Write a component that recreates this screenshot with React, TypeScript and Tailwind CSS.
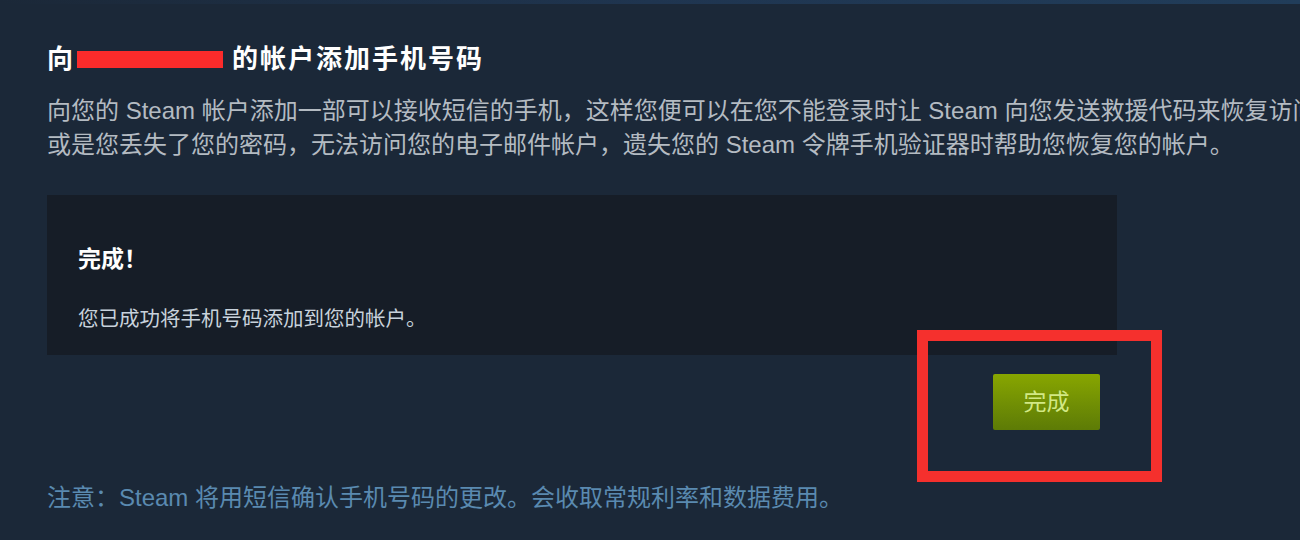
export default function App() {
  return (
    <div
      className="relative h-[540px] w-[1300px] overflow-hidden bg-[#1b2838]"
      style={{ fontFamily: '"Liberation Sans", "Noto Sans CJK SC", sans-serif' }}
    >
      <div className="h-1 bg-gradient-to-r from-[#1b2838] via-[#1f3550] to-[#213d5a]" />

      <div className="pl-[47px]">
        <h1 className="mt-[37px] flex h-[36px] items-center text-[26px] font-bold leading-[36px] text-white">
          <span>向</span>
          <span className="ml-[4px] inline-block h-[17px] w-[146px] bg-[#fb2b2b]" />
          <span className="ml-[9px] tracking-[2px]">的帐户添加手机号码</span>
        </h1>

        {/* first line runs past the right edge, as in the original page */}
        <p className="mt-[17px] whitespace-nowrap text-[24px] leading-[34px] text-[#b4bbc2]">
          向您的 Steam 帐户添加一部可以接收短信的手机，这样您便可以在您不能登录时让 Steam 向您发送救援代码来恢复访问，
          <br />
          或是您丢失了您的密码，无法访问您的电子邮件帐户，遗失您的 Steam 令牌手机验证器时帮助您恢复您的帐户。
        </p>

        <div className="mt-[33px] h-[160px] w-[1070px] bg-[#161d27] pl-[31px] pt-[49px]">
          <div className="text-[23px] font-bold leading-[30px] text-white">完成！</div>
          <div className="mt-[31px] text-[20.5px] leading-[28px] text-[#c8d2dc]">
            您已成功将手机号码添加到您的帐户。
          </div>
        </div>

        <div className="mt-[19px] flex w-[1070px] justify-end pr-[17px]">
          <button className="flex h-[56px] w-[107px] items-center justify-center rounded-[2px] bg-gradient-to-b from-[#88a600] to-[#5d7b06] text-[23px] text-[#d2e885]">
            完成
          </button>
        </div>

        <p className="mt-[53px] whitespace-nowrap text-[24px] leading-[30px] text-[#5a8ab0]">
          注意：Steam 将用短信确认手机号码的更改。会收取常规利率和数据费用。
        </p>
      </div>

      <div className="absolute left-[917px] top-[330px] h-[152px] w-[245px] border-[11px] border-[#f5302d]" />
    </div>
  );
}
